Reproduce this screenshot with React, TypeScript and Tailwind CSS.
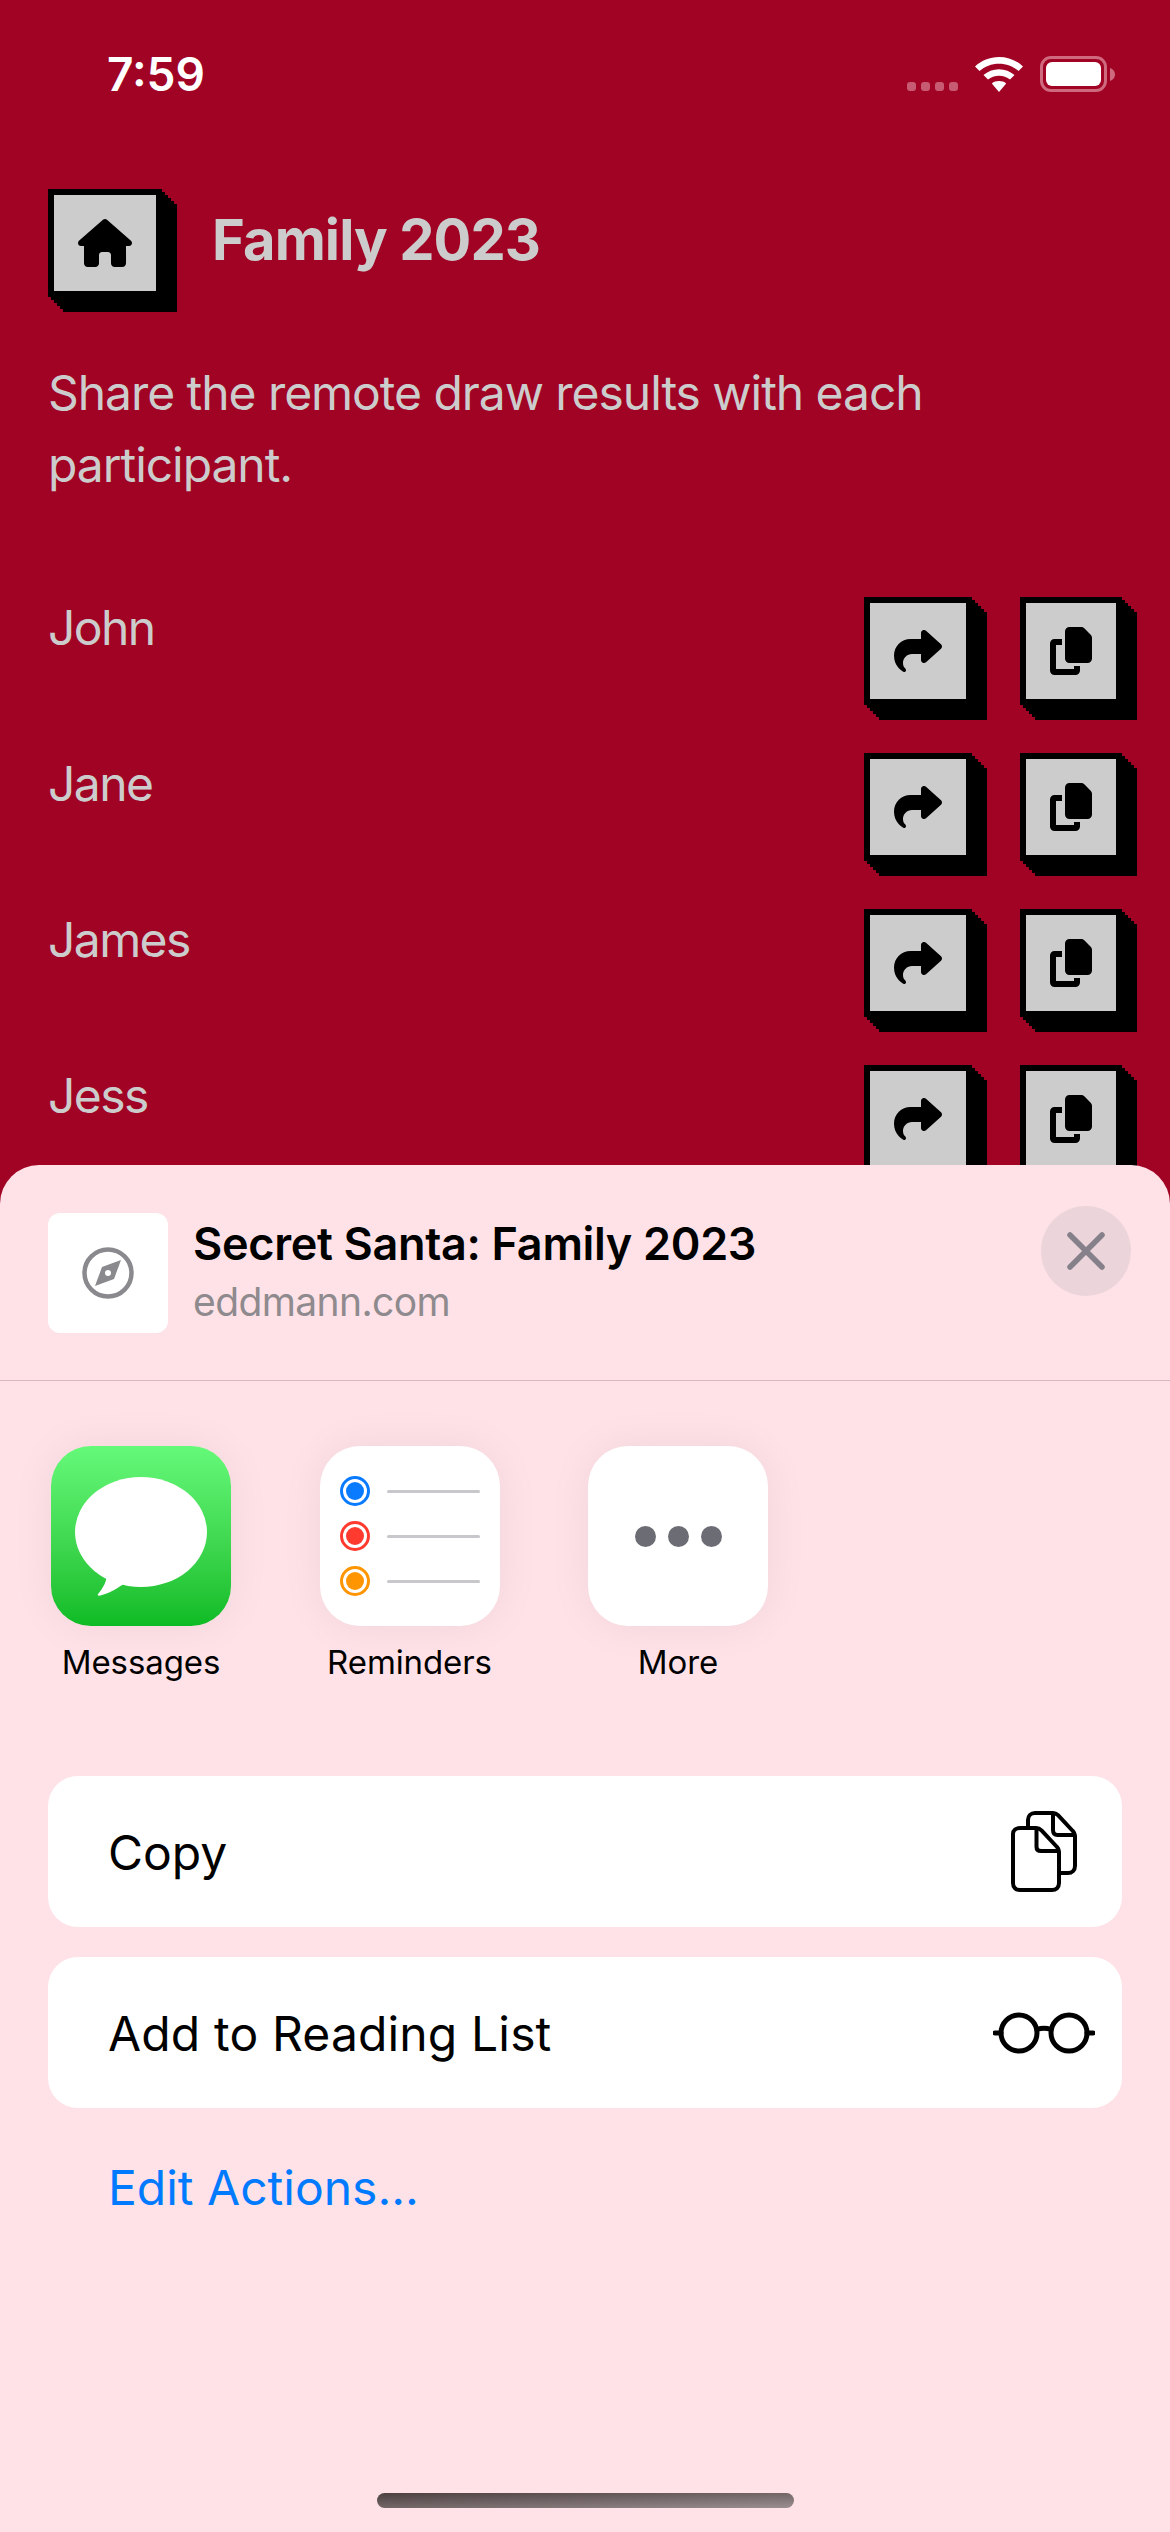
import React from "react";
import { FaCopy, FaHouse, FaShare } from "react-icons/fa6";

const names = ["John", "Jane", "James", "Jess"];

function Shadowed({ w, children }: { w: string; children: React.ReactNode }) {
  return (
    <button
      className={`${w} h-[108px] shrink-0 flex items-center justify-center bg-[#cccccc] border-[6px] border-black text-black text-[48px] shadow-[3px_3px_0_#000,6px_6px_0_#000,9px_9px_0_#000,12px_12px_0_#000,15px_15px_0_#000]`}
    >
      {children}
    </button>
  );
}

function Wifi() {
  return (
    <svg width="48" height="35" viewBox="0 0 48 35" fill="white">
      <path d="M24 0C14.800 0 6.500 3.400 0 9.500L4.500 14C9.700 9.400 16.500 6.700 24 6.700C31.500 6.700 38.300 9.400 43.500 14L48 9.500C41.500 3.400 33.200 0 24 0Z" />
      <path d="M24 12.200C18 12.200 12.600 14.400 8.500 18L13 22.600C16 20.200 19.800 18.800 24 18.800C28.200 18.800 32 20.200 35 22.600L39.500 18C35.400 14.400 30 12.200 24 12.200Z" />
      <path d="M24 24C21.200 24 18.800 24.800 16.800 26.400L24 35L31.200 26.400C29.200 24.800 26.800 24 24 24Z" />
    </svg>
  );
}

function Battery() {
  return (
    <div className="flex items-center">
      <div className="w-[67px] h-[36px] rounded-[11px] border-[3px] border-[#cf6a7e] p-[3px]">
        <div className="w-full h-full rounded-[6px] bg-white" />
      </div>
      <svg className="ml-[3px]" width="5" height="13" viewBox="0 0 5 13" fill="#cf6a7e">
        <path d="M0 0C3 1 5 3.500 5 6.500C5 9.500 3 12 0 13Z" />
      </svg>
    </div>
  );
}

function MessageBubble() {
  return (
    <svg className="mt-[2px]" width="132" height="120" viewBox="0 0 132 120" fill="white">
      <ellipse cx="66" cy="55" rx="66" ry="55" />
      <path d="M32 92C33 104 28 111 23 117C22 119 24 119 27 118C38 115 46 109 52 104Z" />
    </svg>
  );
}

function ReminderRow({ color }: { color: string }) {
  return (
    <div className="flex items-center gap-[17px]">
      <div className={`w-[30px] h-[30px] rounded-full border-[3px] p-[3px] ${color === "blue" ? "border-[#0a7aff]" : color === "red" ? "border-[#ff3b30]" : "border-[#ff9500]"}`}>
        <div className={`w-full h-full rounded-full ${color === "blue" ? "bg-[#0a7aff]" : color === "red" ? "bg-[#ff3b30]" : "bg-[#ff9500]"}`} />
      </div>
      <div className="w-[93px] h-[3px] rounded-full bg-[#c7c7cc]" />
    </div>
  );
}

function AppTile({ label, children, bg }: { label: string; children: React.ReactNode; bg: string }) {
  return (
    <div className="w-[180px] flex flex-col items-center">
      <div className={`w-[180px] h-[180px] rounded-[40px] flex items-center justify-center shadow-[0_0_45px_rgba(0,0,0,0.06)] ${bg}`}>
        {children}
      </div>
      <span className="mt-[18px] h-[36px] leading-[36px] text-[33px] tracking-[-0.1px] text-black whitespace-nowrap">{label}</span>
    </div>
  );
}

function CopyOutline() {
  return (
    <svg width="66" height="82" viewBox="0 0 66 82" fill="none" stroke="black" strokeWidth="4" strokeLinejoin="round" strokeLinecap="round">
      <path d="M17 17V9C17 5 20 2 24 2H42C44 2 45.500 2.700 47 4.200L61.800 20C63.300 21.500 64 23 64 25V55C64 59 61 62 57 62H48" />
      <path d="M42 2.500V19C42 22 43.500 24 46.500 24H63.500" />
      <path d="M2 23C2 19 5 17 9 17H25C27.500 17 29 17.800 30.500 19.300L46 36C47.500 37.500 48 39 48 41V72C48 76.500 45 79 41 79H9C5 79 2 76.500 2 72Z" />
      <path d="M25.500 17.500V36C25.500 39 27 40 30 40H47.500" />
    </svg>
  );
}

function Glasses() {
  return (
    <svg width="102" height="42" viewBox="0 0 102 42" fill="none" stroke="black" strokeWidth="5" strokeLinecap="round">
      <circle cx="26" cy="21" r="18" />
      <circle cx="76" cy="21" r="18" />
      <path d="M44 17.500C48 16 54 16 58 17.500" />
      <path d="M2 21H8M94 21H100" />
    </svg>
  );
}

export default function App() {
  return (
    <div className="relative w-[1170px] h-[2532px] overflow-hidden bg-[#a10324] font-['Inter','Liberation_Sans',sans-serif]">
      <div className="flex items-center justify-between h-[148px] pl-[107px] pr-[55px]">
        <span className="text-[46px] font-semibold text-white leading-none">7:59</span>
        <div className="flex items-center">
          <div className="flex gap-[5px] mt-[25px] mr-[17px]">
            <div className="w-[9px] h-[9px] rounded-[3px] bg-[#c75b72]" />
            <div className="w-[9px] h-[9px] rounded-[3px] bg-[#c75b72]" />
            <div className="w-[9px] h-[9px] rounded-[3px] bg-[#c75b72]" />
            <div className="w-[9px] h-[9px] rounded-[3px] bg-[#c75b72]" />
          </div>
          <div className="mr-[17px]"><Wifi /></div>
          <Battery />
        </div>
      </div>

      <div className="px-[48px]">
        <div className="flex items-center mt-[41px]">
          <Shadowed w="w-[114px]"><FaHouse className="text-[54px]" /></Shadowed>
          <h1 className="ml-[50px] mt-[-6px] text-[56px] tracking-[-0.9px] font-bold text-[#cccccc] leading-none">Family 2023</h1>
        </div>

        <p className="mt-[60px] text-[48px] tracking-[-1.05px] leading-[72px] text-[#cccccc]">
          Share the remote draw results with each participant.
        </p>

        <div className="mt-[96px] flex flex-col gap-[48px]">
          {names.map((n) => (
            <div key={n} className="flex items-start justify-between">
              <span className="mt-[-5px] text-[48px] tracking-[-1.6px] leading-[72px] text-[#cccccc]">{n}</span>
              <div className="flex gap-[48px]">
                <Shadowed w="w-[108px]"><FaShare /></Shadowed>
                <Shadowed w="w-[102px]"><FaCopy /></Shadowed>
              </div>
            </div>
          ))}
        </div>
      </div>

      <div className="absolute left-0 right-0 top-[1165px] bottom-0 rounded-t-[39px] bg-[#fee2e7]">
        <div className="relative flex items-start h-[216px] pl-[48px] pt-[48px] border-b border-[#d9b8be]">
          <div className="w-[120px] h-[120px] rounded-[12px] bg-white flex items-center justify-center">
            <svg width="52" height="52" viewBox="0 0 52 52" fill="none">
              <circle cx="26" cy="26" r="23.500" stroke="#8a8a8e" strokeWidth="4.500" />
              <path d="M39 13L32 32L13 39L20 20Z" fill="#8a8a8e" />
              <circle cx="26" cy="26" r="3" fill="white" />
            </svg>
          </div>
          <div className="ml-[25px] flex flex-col">
            <span className="text-[45px] tracking-[-0.32px] leading-[60px] mt-[1px] font-semibold text-black">Secret Santa: Family 2023</span>
            <span className="text-[39px] tracking-[-0.6px] leading-[48px] mt-[4px] text-[#8e8a8e]">eddmann.com</span>
          </div>
          <div className="absolute right-[39px] top-[41px] w-[90px] h-[90px] rounded-full bg-[#ecd5da] flex items-center justify-center">
            <svg width="38" height="38" viewBox="0 0 38 38" stroke="#85808a" strokeWidth="5.500" strokeLinecap="round">
              <path d="M3 3L35 35M35 3L3 35" />
            </svg>
          </div>
        </div>

        <div className="flex gap-[88.500px] pl-[51px] pt-[65px]">
          <AppTile label="Messages" bg="bg-gradient-to-b from-[#65f979] to-[#0bbb24]">
            <MessageBubble />
          </AppTile>
          <AppTile label="Reminders" bg="bg-white">
            <div className="flex flex-col gap-[15px]">
              <ReminderRow color="blue" />
              <ReminderRow color="red" />
              <ReminderRow color="orange" />
            </div>
          </AppTile>
          <AppTile label="More" bg="bg-white">
            <div className="flex gap-[12px]">
              <div className="w-[21px] h-[21px] rounded-full bg-[#6c6c74]" />
              <div className="w-[21px] h-[21px] rounded-full bg-[#6c6c74]" />
              <div className="w-[21px] h-[21px] rounded-full bg-[#6c6c74]" />
            </div>
          </AppTile>
        </div>

        <div className="mt-[96px] mx-[48px] flex flex-col gap-[30px]">
          <div className="h-[151px] rounded-[30px] bg-white flex items-center justify-between pl-[60px] pr-[45px]">
            <span className="mt-[3px] text-[48px] text-black">Copy</span>
            <CopyOutline />
          </div>
          <div className="h-[151px] rounded-[30px] bg-white flex items-center justify-between pl-[60px] pr-[27px]">
            <span className="mt-[3px] text-[48px] tracking-[0.15px] text-black">Add to Reading List</span>
            <Glasses />
          </div>
        </div>
        <div className="mt-[50px] pl-[108px] text-[48px] leading-[60px] text-[#007aff]">Edit Actions...</div>

        <div className="absolute left-[377px] bottom-[24px] w-[417px] h-[15px] rounded-full bg-gradient-to-br from-[#4d4041] to-[#9c8f91]" />
      </div>
    </div>
  );
}
